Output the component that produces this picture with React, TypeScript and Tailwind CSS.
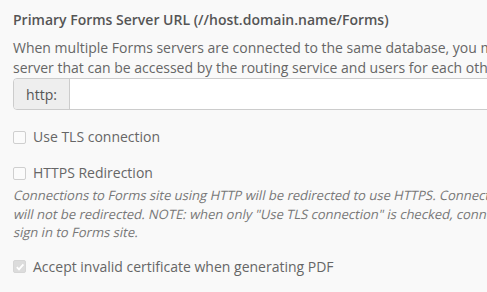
import React from "react";

function Box({ checked = false }: { checked?: boolean }) {
  return (
    <span
      className={
        "inline-flex h-[13px] w-[13px] shrink-0 items-center justify-center rounded-[2px] border " +
        (checked ? "border-[#d6d6d6] bg-[#dcdcdc]" : "border-[#cfcfcf] bg-[#fbfbfb]")
      }
    >
      {checked && (
        <svg width="10" height="10" viewBox="0 0 10 10">
          <path d="M1.8 5.2 L4 7.4 L8.4 2.4" fill="none" stroke="#ffffff" strokeWidth="1.8" />
        </svg>
      )}
    </span>
  );
}

function Oblique({ children }: { children: React.ReactNode }) {
  return <div className="origin-[0_75%] -skew-x-12">{children}</div>;
}

export default function App() {
  return (
    <div
      className="h-[292px] w-[487px] overflow-hidden bg-[#f9f9f9] text-[#666]"
      style={{ fontFamily: '"Open Sans", sans-serif' }}
    >
      <div className="w-[800px] pl-[13px] pt-[10px]">
        <div className="text-[14px] font-semibold leading-[20px] text-[#555]">
          Primary Forms Server URL (//host.domain.name/Forms)
        </div>
        <div className="mt-[8px] whitespace-nowrap text-[14px] leading-[20px]">
          When multiple Forms servers are connected to the same database, you must specify the URL of this
          <br />
          server that can be accessed by the routing service and users for each other.
        </div>
        <div className="flex h-[32px] w-[700px] overflow-hidden rounded-[4px] border border-[#ccc]">
          <div className="flex w-[56px] items-center justify-center border-r border-[#ccc] bg-[#eee] text-[14px] text-[#555]">
            http:
          </div>
          <div className="flex-1 bg-white" />
        </div>
        <label className="mt-[17px] flex items-center gap-[7px] text-[14px] leading-[20px]">
          <Box />
          <span>Use TLS connection</span>
        </label>
        <label className="mt-[16px] flex items-center gap-[7px] text-[14px] leading-[20px]">
          <Box />
          <span>HTTPS Redirection</span>
        </label>
        <div className="mt-[3px] whitespace-nowrap text-[13px] leading-[18.5px] text-[#777]">
          <Oblique>Connections to Forms site using HTTP will be redirected to use HTTPS. Connections using HTTPS</Oblique>
          <Oblique>will not be redirected. NOTE: when only "Use TLS connection" is checked, connections can still</Oblique>
          <Oblique>sign in to Forms site.</Oblique>
        </div>
        <label className="mt-[15px] flex items-center gap-[7px] text-[14px] leading-[20px]">
          <Box checked />
          <span>Accept invalid certificate when generating PDF</span>
        </label>
      </div>
    </div>
  );
}
